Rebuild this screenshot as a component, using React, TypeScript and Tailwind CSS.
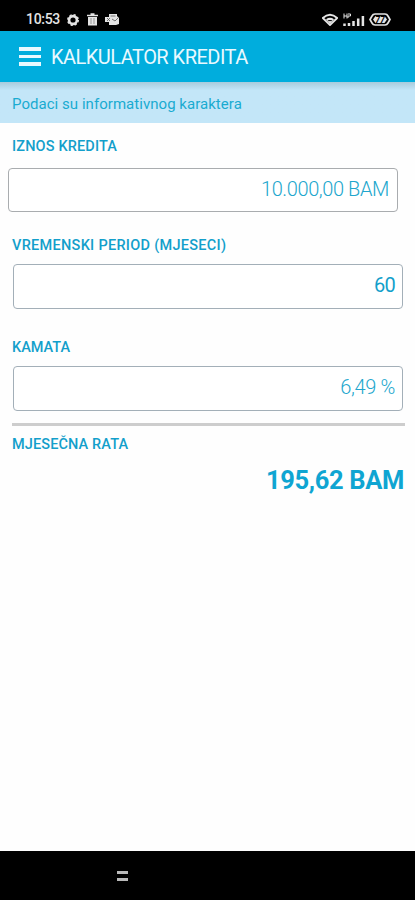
import React from "react";

function StatusBar() {
  return (
    <div className="flex h-[31px] shrink-0 items-start justify-between bg-black pt-[10px] pr-[24px] pl-[26px] text-[#e4e4e4]">
      <div className="flex h-[19px] items-center">
        <span className="w-[41px] text-[14px] leading-[19px] font-medium tracking-[-0.3px] whitespace-nowrap">10:53</span>
        <svg width="12" height="12" viewBox="0 0 12 12" fill="none" stroke="currentColor">
          <circle cx="6" cy="6" r="3.9" strokeWidth="2.6" />
          <circle cx="6" cy="6" r="5.3" strokeWidth="1.4" strokeDasharray="2.2 1.96" />
        </svg>
        <svg className="ml-[8px]" width="11" height="13" viewBox="0 0 11 13" fill="none" stroke="currentColor">
          <path d="M0 2.5h11M3.5 1h4" strokeWidth="1.7" />
          <path d="M1 4h9v8.5H1z" fill="currentColor" stroke="none" />
          <path d="M4 5v6M7 5v6" stroke="#777" strokeWidth="0.7" />
        </svg>
        <svg className="ml-[7px]" width="15" height="13" viewBox="0 0 15 13">
          <path d="M4 1h8v2l2 2v6l-3 1H4V9H0V4h4z" fill="currentColor" />
          <path d="M5.5 3h5M2 5l3 3M5 5L2 8M7 6l3 2 3-3" fill="none" stroke="#555" strokeWidth="0.8" />
        </svg>
      </div>
      <div className="flex h-[19px] items-center">
        <svg width="16" height="13" viewBox="0 0 16 13">
          <path d="M.8 5Q8-1.5 15.2 5L8 12z" fill="none" stroke="currentColor" strokeWidth="1.8" strokeLinejoin="round" />
          <path d="M4 6.2Q8 3.5 12 6.2L8 11z" fill="currentColor" />
          <path d="M6.2 7.6h3.6" stroke="black" strokeWidth="1" />
        </svg>
        <svg className="ml-[5px]" width="22" height="14" viewBox="0 0 22 14" fill="none" stroke="currentColor">
          <path d="M1 0.5v5M1 3h3M4 .5v5M5 1h2.5v2H5v2" strokeWidth="1" />
          <path d="M1.5 10.5V13M6 10V13M10.5 8v5M15.2 5.5V13M19.9 3v10" strokeWidth="2.5" />
        </svg>
        <svg className="ml-[4px]" width="22" height="13" viewBox="0 0 22 13" fill="none" stroke="currentColor">
          <path d="M6 1h10q2 0 3 2l2 3.5-2 3.5q-1 2-3 2H6q-2 0-3-2L1 6.5 3 3q1-2 3-2z" strokeWidth="1.7" />
          <path d="M6.5 3h9l2.5 3.5-2.5 3.5h-9L4 6.5z" fill="currentColor" stroke="none" />
          <text x="6.3" y="9.6" fill="black" stroke="none" fontSize="8.5" fontWeight="700" fontStyle="italic">77</text>
        </svg>
      </div>
    </div>
  );
}

function Header() {
  return (
    <header className="flex h-[51px] shrink-0 items-center bg-[#00addd] pl-[19px]">
      <div className="flex w-[22px] flex-col gap-[4px]">
        <div className="h-[3.5px] bg-[#e8f9ff]" />
        <div className="h-[3.5px] bg-[#e8f9ff]" />
        <div className="h-[3.5px] bg-[#e8f9ff]" />
      </div>
      <h1 className="ml-[10px] text-[20px] leading-[24px] tracking-[-0.52px] whitespace-nowrap text-[#e8f9ff]">KALKULATOR KREDITA</h1>
    </header>
  );
}

function Label({ children, className = "" }: { children: React.ReactNode; className?: string }) {
  return <div className={`pl-[12px] text-[14.5px] leading-[20px] font-medium whitespace-nowrap text-[#139fcb] ${className}`}>{children}</div>;
}

export default function App() {
  return (
    <div className="flex h-[900px] w-[415px] flex-col overflow-hidden bg-[#fefefe] font-[Roboto,sans-serif]">
      <StatusBar />
      <Header />
      <div className="h-[41px] shrink-0 bg-[#c3e6f8] bg-linear-to-b from-[#a9cbdc] to-[#c3e6f8] to-20% pl-[12px] text-[15px] leading-[45px] tracking-[0.04px] text-[#19abd1]">
        Podaci su informativnog karaktera
      </div>
      <main className="flex flex-1 flex-col">
        <div className="mt-[14px]"><Label className="tracking-[0.15px]">IZNOS KREDITA</Label></div>
        <div className="mt-[11px] ml-[8px] flex h-[44px] w-[390px] justify-end rounded-[4px] border-[1.5px] border-[#a9acaf] bg-white pr-[8px] text-[20px] leading-[40px] font-light tracking-[-0.4px] text-[#21a6cd]">10.000,00 BAM</div>
        <div className="mt-[24px]"><Label className="tracking-[0.29px]">VREMENSKI PERIOD (MJESECI)</Label></div>
        <div className="mt-[8px] ml-[13px] flex h-[45px] w-[390px] justify-end rounded-[4px] border-[1.5px] border-[#a3afb8] bg-white pr-[7px] text-[20px] leading-[41px] tracking-[-0.7px] text-[#139fcb]">60</div>
        <div className="mt-[29px]"><Label>KAMATA</Label></div>
        <div className="mt-[8px] ml-[13px] flex h-[45px] w-[390px] justify-end rounded-[4px] border-[1.5px] border-[#a3afb8] bg-white pr-[7px] text-[20px] leading-[41px] font-light tracking-[-0.35px] text-[#21a6cd]">6,49 %</div>
        <div className="mt-[12px] ml-[12px] h-[3px] w-[393px] bg-[#cdcdcd]" />
        <div className="mt-[9px]"><Label className="tracking-[0.12px]">MJESEČNA RATA</Label></div>
        <div className="mt-[10px] pr-[11px] text-right text-[25.5px] leading-[30px] font-bold tracking-[-0.35px] text-[#0fa5d2]">195,62 BAM</div>
      </main>
      <nav className="flex h-[49px] shrink-0 flex-col gap-[4px] bg-black pt-[20px] pl-[117px]">
        <div className="h-[3px] w-[11px] bg-[#b9b9b9]" />
        <div className="h-[3px] w-[11px] bg-[#b9b9b9]" />
      </nav>
    </div>
  );
}
